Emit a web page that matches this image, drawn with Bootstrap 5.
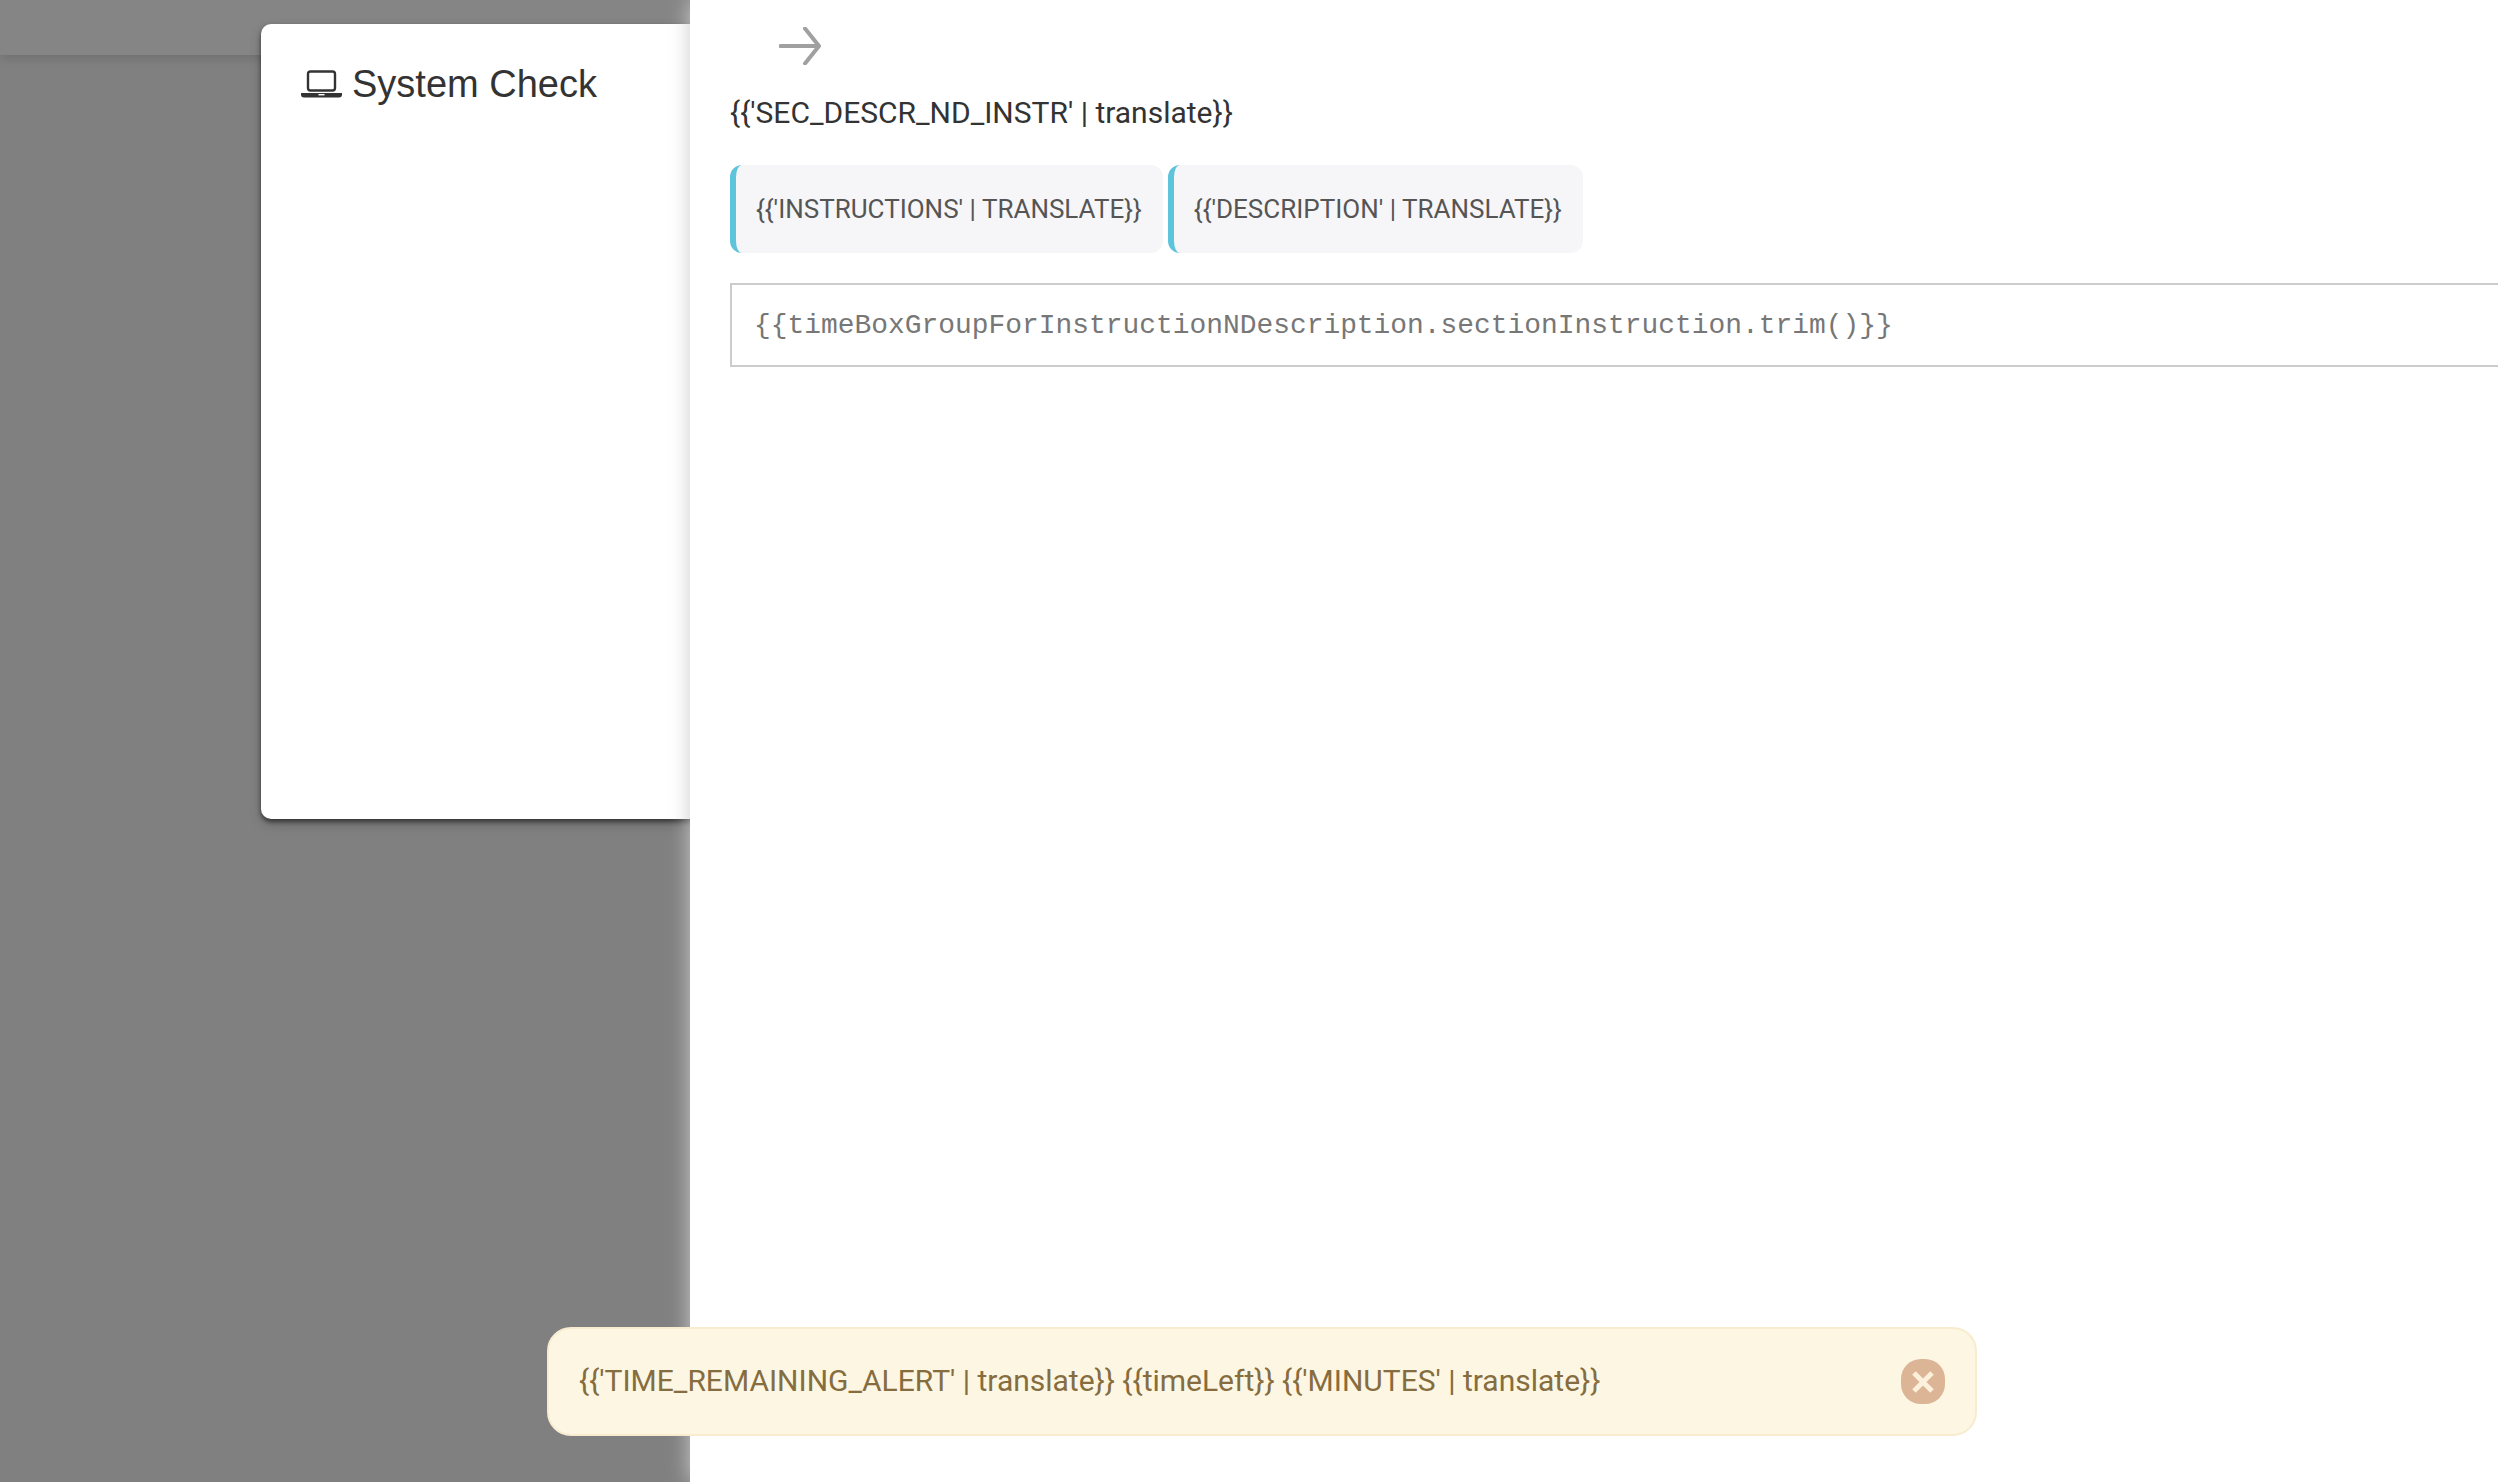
<!DOCTYPE html>
<html lang="en">
<head>
<meta charset="utf-8">
<title>System Check</title>
<link rel="stylesheet" href="https://cdn.jsdelivr.net/npm/bootstrap@5.3.0/dist/css/bootstrap.min.css">
<style>
html,body{height:100%;overflow:hidden}
body{background:#808080;font-family:Roboto,"Liberation Sans",sans-serif}
.stage{height:1482px;width:2498px;overflow:hidden;background:#808080}
.topband{height:55px;background:#858585;box-shadow:0 3px 10px rgba(0,0,0,.14)}
.check-card{width:560px;height:795px;margin:-31px 0 0 261px;background:#fff;border:0;border-radius:10px;padding:38px 40px;box-shadow:0 3px 5px rgba(0,0,0,.55),0 6px 14px rgba(0,0,0,.14);position:relative}
.check-title{font-family:"Liberation Sans",Arial,sans-serif;font-size:38px;line-height:44px;color:#333;gap:10px;margin:0;font-weight:400}
.drawer{position:absolute;left:690px;top:0;right:0;bottom:0;background:#fff;box-shadow:0 0 20px #ccc;padding:27px 0 0 40px;overflow:hidden}
.back-arrow{display:block;margin-left:49px;width:42px;height:38px}
.sec-title{font-size:30px;line-height:38px;color:#333;margin:29px 0 0;font-weight:400}
.tab-row{gap:5px;margin-top:33px}
.tab-pill{height:88px;background:#f6f6f8;border:0;border-left:6px solid #5dc4db;border-radius:12px;color:#555;font-size:26px;line-height:88px;padding:0 21px 0 20px;white-space:nowrap}
.code-box{height:84px;width:2000px;margin-top:30px;border:2px solid #ccc;padding:0 22px;font-family:"Liberation Mono","Courier New",monospace;font-size:27.92px;line-height:82px;color:#777;white-space:nowrap}
.time-alert{position:absolute;left:547px;top:1327px;width:1430px;height:109px;background:#fdf6e3;border:2px solid #f8ecd0;border-radius:24px;color:#856d40;font-size:30px;padding:0 30px;margin:0}
.alert-msg{margin-top:-3px}
.close-round{width:44px;height:45px;background:#dbb595;border:0;border-radius:20px;padding:0}
</style>
</head>
<body>
<div class="stage position-relative">
  <div class="topband"></div>
  <div class="card check-card">
    <h1 class="check-title d-flex align-items-center">
      <svg width="41" height="28" viewBox="0 0 41 28" aria-hidden="true"><rect x="7" y="1.5" width="27" height="19" rx="2.5" fill="none" stroke="#333" stroke-width="2.4"/><path d="M0 23h41v1.5a3 3 0 0 1-3 3H3a3 3 0 0 1-3-3z" fill="#333"/><rect x="17.5" y="24" width="6" height="1.4" fill="#fff"/></svg>
      <span>System Check</span>
    </h1>
  </div>
  <aside class="drawer">
    <svg class="back-arrow" viewBox="0 0 42 38" aria-hidden="true"><path d="M1.5 19H40M26 1.5 40 19 26 36.5" fill="none" stroke="#a0a0a0" stroke-width="4" stroke-linecap="round" stroke-linejoin="round"/></svg>
    <p class="sec-title">{{'SEC_DESCR_ND_INSTR' | translate}}</p>
    <div class="d-flex tab-row">
      <div class="tab-pill">{{'INSTRUCTIONS' | TRANSLATE}}</div>
      <div class="tab-pill">{{'DESCRIPTION' | TRANSLATE}}</div>
    </div>
    <div class="code-box">{{timeBoxGroupForInstructionNDescription.sectionInstruction.trim()}}</div>
  </aside>
  <div class="alert time-alert d-flex align-items-center justify-content-between" role="alert">
    <span class="alert-msg">{{'TIME_REMAINING_ALERT' | translate}} {{timeLeft}} {{'MINUTES' | translate}}</span>
    <button type="button" class="close-round d-flex align-items-center justify-content-center" aria-label="Close">
      <svg width="22" height="22" viewBox="0 0 22 22" aria-hidden="true"><path d="M2 2 20 20M20 2 2 20" stroke="#fdf0dc" stroke-width="5"/></svg>
    </button>
  </div>
</div>
</body>
</html>
